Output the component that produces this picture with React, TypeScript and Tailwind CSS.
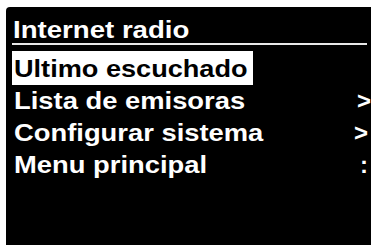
type MenuRow = {
  label: string
  mark?: string
  markPad: string
}

const rows: MenuRow[] = [
  { label: 'Lista de emisoras', mark: '>', markPad: 'pr-0' },
  { label: 'Configurar sistema', mark: '>', markPad: 'pr-[3px]' },
  { label: 'Menu principal', mark: ':', markPad: 'pr-[3px]' },
]

export default function App() {
  return (
    <div className="w-[371px] h-[245px] bg-white pt-[7px] pl-[6px] flex overflow-hidden">
      <div className="flex-1 flex flex-col bg-black rounded-tl-[4px] font-['Liberation_Sans',Arial,sans-serif] font-bold text-white text-[24px]">
        {/* title + rule */}
        <div className="ml-[6px] mr-[4px] mt-[10px] border-b-2 border-[#e8e8e8] leading-[26px] pl-[1px]">
          <span className="inline-block origin-left scale-x-[1.15] whitespace-nowrap">Internet radio</span>
        </div>

        {/* selected item */}
        <div className="ml-[6px] mt-[6px] w-[241px] h-[34px] bg-white text-black leading-[32px] pt-[2px] pl-[2px]">
          <span className="inline-block origin-left scale-x-[1.13] whitespace-nowrap">Ultimo escuchado</span>
        </div>

        {rows.map((row) => (
          <div key={row.label} className="flex items-center justify-between h-[32px] leading-[32px] ml-[8px]">
            <span className="inline-block origin-left scale-x-[1.14] whitespace-nowrap">{row.label}</span>
            {row.mark && <span className={row.markPad}>{row.mark}</span>}
          </div>
        ))}
      </div>
    </div>
  )
}
